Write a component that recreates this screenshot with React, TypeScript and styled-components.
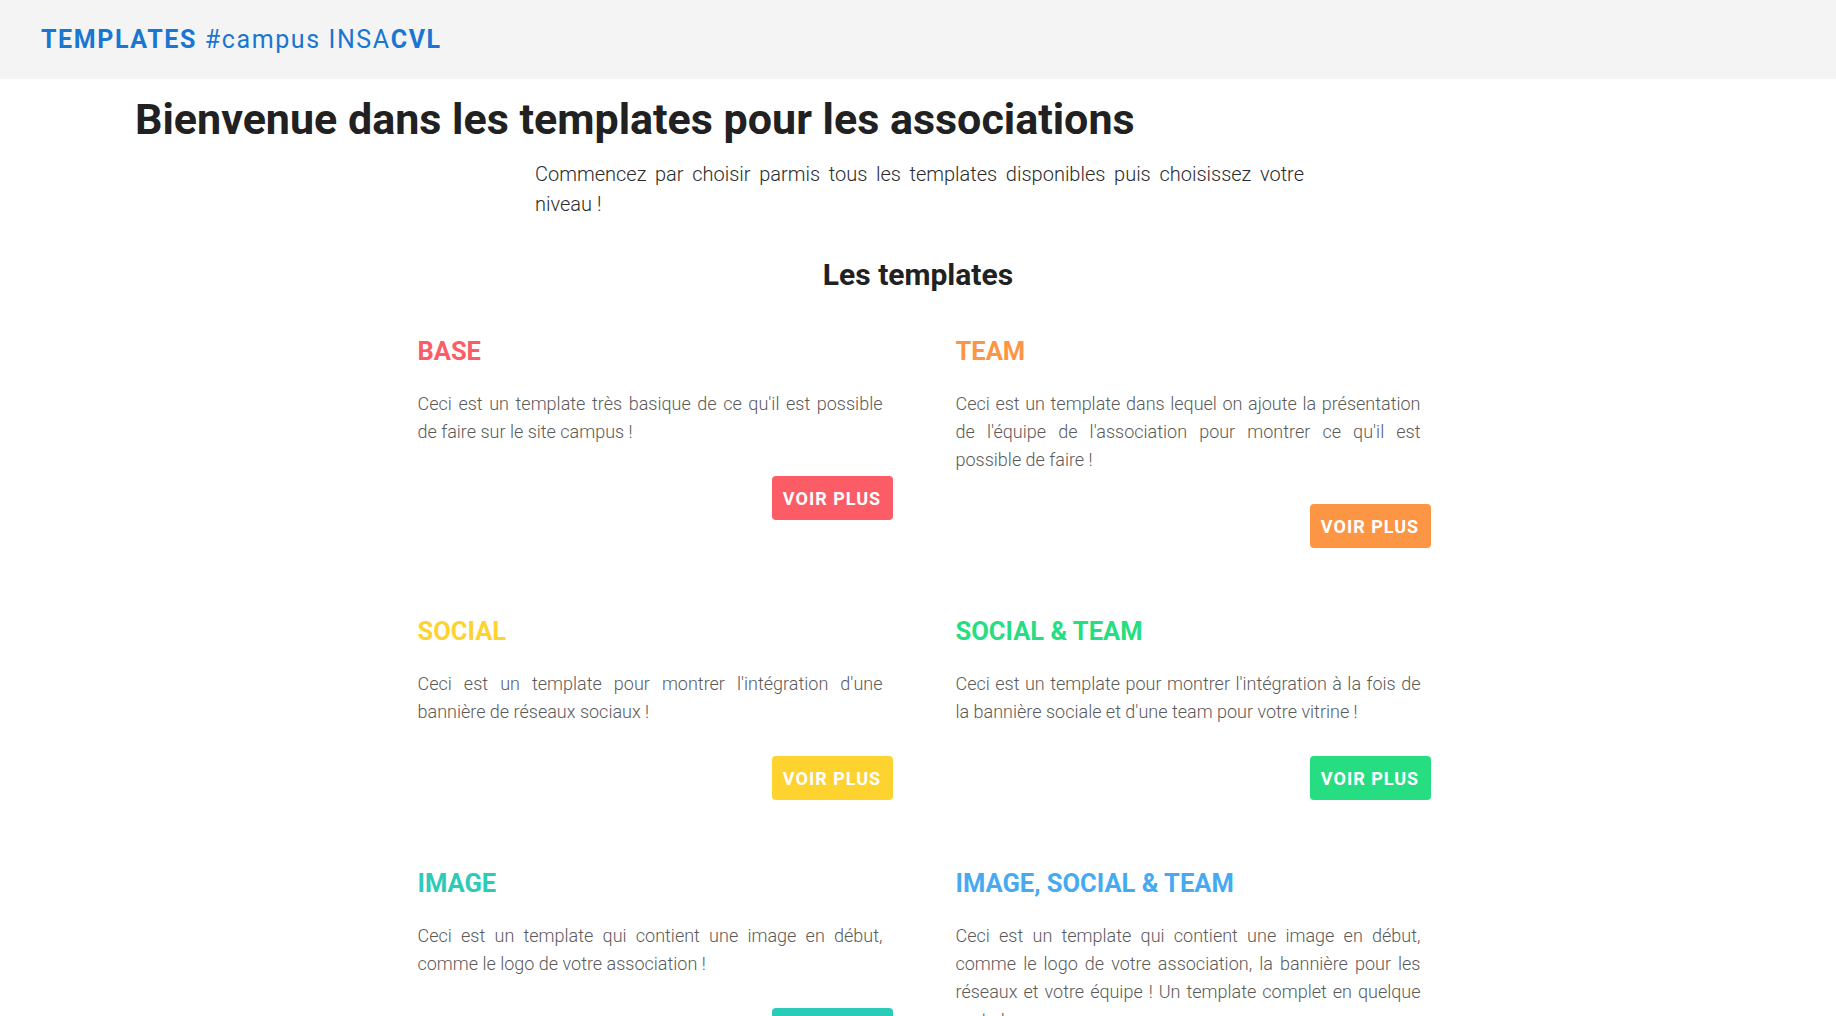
import React from "react";
import styled, { createGlobalStyle } from "styled-components";

const GlobalStyle = createGlobalStyle`
  html, body {
    margin: 0;
    padding: 0;
    background: #ffffff;
    font-family: Roboto, "Noto Sans", "Liberation Sans", sans-serif;
    color: #212121;
  }
  * { box-sizing: border-box; }
`;

const Header = styled.header`
  height: 79px;
  background: #f4f4f4;
  display: flex;
  align-items: center;
  padding-left: 41px;
`;

const Logo = styled.div`
  font-size: 25px;
  letter-spacing: 1.6px;
  color: #1976d2;
  font-weight: 400;
  line-height: 1;
`;

const Strong = styled.span`
  font-weight: 700;
`;

const Main = styled.main`
  display: flex;
  flex-direction: column;
`;

const Title = styled.h1`
  margin: 14px 0 0 135px;
  font-size: 43px;
  line-height: 52px;
  font-weight: 700;
  color: #212121;
`;

const Intro = styled.p`
  width: 769px;
  margin: 14px 0 0 calc(50% - 383px);
  font-size: 20px;
  line-height: 30px;
  font-weight: 300;
  color: #2b2b2b;
  text-align: justify;
`;

const SectionTitle = styled.h2`
  margin: 38px 0 0;
  text-align: center;
  font-size: 30px;
  line-height: 36px;
  font-weight: 700;
  color: #212121;
`;

const Grid = styled.section`
  width: 1025px;
  margin: 42px auto 0;
  display: grid;
  grid-template-columns: 1fr 1fr;
  column-gap: 51px;
  row-gap: 67px;
  align-items: start;
`;

const Card = styled.article`
  display: flex;
  flex-direction: column;
  padding-left: 12px;
`;

const CardTitle = styled.h3<{ $color: string }>`
  margin: 0;
  font-size: 25.5px;
  line-height: 32px;
  font-weight: 700;
  color: ${(p) => p.$color};
`;

const CardText = styled.p`
  margin: 23px 10px 0 0;
  font-size: 18px;
  line-height: 28px;
  font-weight: 300;
  color: #5a5a5a;
  text-align: justify;
`;

const Actions = styled.div`
  display: flex;
  justify-content: flex-end;
  margin-top: 30px;
`;

const Button = styled.a<{ $color: string }>`
  display: inline-flex;
  align-items: center;
  justify-content: center;
  height: 44px;
  width: 121px;
  border-radius: 4px;
  background: ${(p) => p.$color};
  color: #ffffff;
  font-size: 18px;
  font-weight: 700;
  letter-spacing: 1px;
  text-transform: uppercase;
  text-decoration: none;
  cursor: pointer;
`;

const templates = [
  {
    name: "BASE",
    color: "#fc5c65",
    text: "Ceci est un template très basique de ce qu'il est possible de faire sur le site campus !",
  },
  {
    name: "TEAM",
    color: "#fd9644",
    text: "Ceci est un template dans lequel on ajoute la présentation de l'équipe de l'association pour montrer ce qu'il est possible de faire !",
  },
  {
    name: "SOCIAL",
    color: "#fed330",
    text: "Ceci est un template pour montrer l'intégration d'une bannière de réseaux sociaux !",
  },
  {
    name: "SOCIAL & TEAM",
    color: "#26de81",
    text: "Ceci est un template pour montrer l'intégration à la fois de la bannière sociale et d'une team pour votre vitrine !",
  },
  {
    name: "IMAGE",
    color: "#2bcbba",
    text: "Ceci est un template qui contient une image en début, comme le logo de votre association !",
  },
  {
    name: "IMAGE, SOCIAL & TEAM",
    color: "#45aaf2",
    text: "Ceci est un template qui contient une image en début, comme le logo de votre association, la bannière pour les réseaux et votre équipe ! Un template complet en quelque sorte !",
  },
];

export default function App() {
  return (
    <>
      <GlobalStyle />
      <Header>
        <Logo>
          <Strong>TEMPLATES</Strong> #campus INSA<Strong>CVL</Strong>
        </Logo>
      </Header>
      <Main>
        <Title>Bienvenue dans les templates pour les associations</Title>
        <Intro>
          Commencez par choisir parmis tous les templates disponibles puis choisissez votre niveau !
        </Intro>
        <SectionTitle>Les templates</SectionTitle>
        <Grid>
          {templates.map((t) => (
            <Card key={t.name}>
              <CardTitle $color={t.color}>{t.name}</CardTitle>
              <CardText>{t.text}</CardText>
              <Actions>
                <Button $color={t.color}>Voir plus</Button>
              </Actions>
            </Card>
          ))}
        </Grid>
      </Main>
    </>
  );
}
